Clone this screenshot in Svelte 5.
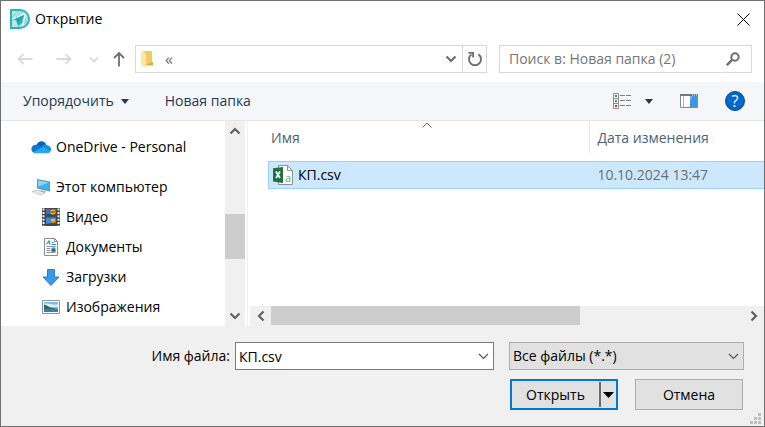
<script lang="ts">
  type Place = { name: string; icon: string; nested: boolean };

  const places: Place[] = [
    { name: "OneDrive - Personal", icon: "cloud", nested: false },
    { name: "Этот компьютер", icon: "computer", nested: false },
    { name: "Видео", icon: "video", nested: true },
    { name: "Документы", icon: "document", nested: true },
    { name: "Загрузки", icon: "download", nested: true },
    { name: "Изображения", icon: "picture", nested: true },
  ];

  const files = [{ name: "КП.csv", modified: "10.10.2024 13:47" }];

  let selected = $state("КП.csv");
  let fileName = $state("КП.csv");
  let filter = $state("all");

  function selectFile(name: string) {
    selected = name;
    fileName = name;
  }
</script>

{#snippet chevron(direction: string)}
  <svg class="chevron {direction}" width="12" height="12" viewBox="0 0 12 12">
    <path d="M1.5 3.5 6 8l4.5-4.5" fill="none" stroke="currentColor" stroke-width="2.2" />
  </svg>
{/snippet}

{#snippet thinChevron()}
  <svg class="thin-chevron" width="11" height="7" viewBox="0 0 11 7">
    <path d="M1 1l4.500 4.500L10 1" fill="none" stroke="currentColor" stroke-width="1.2" />
  </svg>
{/snippet}

{#snippet placeIcon(icon: string)}
  {#if icon === "cloud"}
    <svg width="20" height="20" viewBox="0 0 20 20">
      <path d="M5.500 8C7 4 12.500 2.500 15.200 7.600L11 11z" fill="#0364b8" />
      <path d="M4.200 16.200C-.8 15.500-1 8.600 4.500 7.800c3-.6 4.500.6 7.500 2.500l-7 6z" fill="#0f78d4" />
      <path d="M11 9.500c1.500-2.500 4-2.400 5.300-1.300 4.300.8 4.600 5.300 2.500 6.800z" fill="#1490df" />
      <path d="M2.300 15.300 11.500 10l7.800 4.200c-.6 1.400-1.700 2-3.300 2H5c-1.200 0-2-.3-2.700-.9z" fill="#28a8ea" />
    </svg>
  {:else if icon === "computer"}
    <svg width="20" height="20" viewBox="0 0 20 20">
      <path d="M6 2l13 2.500v10L6 11.500z" fill="#7b8a97" />
      <path d="M7 3.200l11 2.200v7.800l-11-2.600z" fill="#39b4f5" />
      <path d="M7 3.200l11 2.200L7 9.500z" fill="#86d6fb" />
      <path d="M10 13l5 1.200-1 2-5-1z" fill="#a9b1b8" />
      <path d="M1 14.500l5-1.500 8 2.500-4 2.500z" fill="#d4d8dc" stroke="#aab0b6" stroke-width=".6" />
      <path d="M3 14.800l8 2.200M5 14l7 2" stroke="#fff" stroke-width=".6" />
    </svg>
  {:else if icon === "video"}
    <svg width="20" height="20" viewBox="0 0 20 20">
      <path d="M1 1h18v18H1z" fill="#444" />
      <path d="M2.500 1.500v18M17.500 1.500v18" stroke="#f2f2f2" stroke-width="2" stroke-dasharray="2 1.400" />
      <path d="M5 2h10v7.500H5z" fill="#3e6fc4" />
      <path d="M5 10.500h10V19H5z" fill="#4a86d8" />
      <path d="M5 8c2-2 3 0 5-1s3-1 5 0v2.500H5zM5 17c2-1 4 0 5-1s3-1 5 0v3H5z" fill="#31533a" />
      <circle cx="12" cy="5" r="2.600" fill="#e6b422" />
      <path d="M9.600 5h4.800" stroke="#d33b2a" stroke-width="1.400" />
      <circle cx="12" cy="14" r="2.300" fill="#f0c52e" />
      <path d="M6 6.500h2.500M10 15h4" stroke="#d33b2a" stroke-width="1.200" />
    </svg>
  {:else if icon === "document"}
    <svg width="20" height="20" viewBox="0 0 20 20">
      <path d="M3.500 1.500h10l3 3v14h-13z" fill="#fff" stroke="#8b8b8b" />
      <path d="M13.500 1.500v3h3" fill="none" stroke="#8b8b8b" />
      <path d="M5.500 7.500 8 3.500l1 4M6.500 6H9M10.500 5.500h2M10.500 7.500H15" fill="none" stroke="#2b8bd8" />
      <path d="M5.500 9.500h9M5.500 11.500h4M5.500 13.500h4M5.500 15.500h9" stroke="#8f9499" />
      <path d="M10.500 10.500h4v4h-4z" fill="#3d95d5" />
      <path d="M10.500 13l2-1 2 1v1.500h-4z" fill="#31576b" />
    </svg>
  {:else if icon === "download"}
    <svg width="20" height="20" viewBox="0 0 20 20">
      <path d="M6.500 2.500h7V10H18l-8 8.500L2 10h4.500z" fill="#3b97e8" stroke="#2a7fd0" />
    </svg>
  {:else}
    <svg width="20" height="20" viewBox="0 0 20 20">
      <path d="M1.500 3.500h17v13h-17z" fill="#fff" stroke="#919191" />
      <path d="M3 5h14v10H3z" fill="#79bcea" />
      <path d="M3 7c4-1.500 7 1 14 .5V10H3z" fill="#d9effb" />
      <path d="M3 7.500c3 .5 5 3 9 3.800l5 .7H3z" fill="#2e6b55" />
      <path d="M3 12h14v3H3z" fill="#2c83bb" />
    </svg>
  {/if}
{/snippet}

<div class="dialog" role="dialog" aria-label="Открытие">
  <header class="title-bar">
    <svg width="20" height="20" viewBox="0 0 20 20">
      <path d="M0 0h10a10 10 0 0 1 0 20H0z" fill="#2cb5b8" />
      <path d="M2 2h8a8 8 0 0 1 0 16H2z" fill="#b9e6e6" />
      <path d="M2 8l7-6M2 12 13 2M11 18l6-6M8 18l9-9" stroke="#62c9cb" stroke-width="1.200" stroke-dasharray="1 1" />
      <path d="M14.500 5.500 3 10.300l3.300 1.200L8 17z" fill="#22a5aa" />
      <path d="M14.500 5.500 12 14l-4 3 1-5z" fill="#2cb5b8" />
      <path d="M14.500 5 2.500 10.300M15 5.500 12.500 17" stroke="#fff" />
    </svg>
    <h1>Открытие</h1>
    <button class="close" type="button" aria-label="Закрыть">
      <svg width="13" height="13" viewBox="0 0 13 13">
        <path d="M.5.5l12 12M12.500.5l-12 12" stroke="#000" />
      </svg>
    </button>
  </header>

  <nav class="nav-bar">
    <button class="arrow" type="button" aria-label="Назад" disabled>
      <svg width="16" height="12" viewBox="0 0 16 12">
        <path d="M15.500 6H1.500M6.500 1l-5 5 5 5" fill="none" stroke="#dadada" stroke-width="1.800" />
      </svg>
    </button>
    <button class="arrow" type="button" aria-label="Вперёд" disabled>
      <svg width="16" height="12" viewBox="0 0 16 12">
        <path d="M.5 6h14M9.500 1l5 5-5 5" fill="none" stroke="#dadada" stroke-width="1.800" />
      </svg>
    </button>
    <button class="recent" type="button" aria-label="Последние расположения" disabled>
      <svg width="10" height="7" viewBox="0 0 10 7">
        <path d="M1 1.500l4 4 4-4" fill="none" stroke="#dadada" stroke-width="1.800" />
      </svg>
    </button>
    <button class="parent" type="button" aria-label="Вверх">
      <svg width="12" height="16" viewBox="0 0 12 16">
        <path d="M6 15.500V2M1 7l5-5 5 5" fill="none" stroke="#6e6e6e" stroke-width="1.800" />
      </svg>
    </button>
    <div class="address">
      <svg width="14" height="18" viewBox="0 0 14 18">
        <path d="M3 1h9v11.500l1 .5v2H3z" fill="#f0cb62" />
        <path d="M12 12h1v3.500H5z" fill="#d9ad45" />
        <path d="M1 1.500h3.500V3L6 4v12l-1.500 1.500L1 15z" fill="#ffe7a3" />
      </svg>
      <button class="crumb" type="button">«</button>
      <button class="history" type="button" aria-label="Предыдущие расположения">
        {@render chevron("down")}
      </button>
      <button class="refresh" type="button" aria-label="Обновить">
        <svg width="16" height="16" viewBox="0 0 16 16">
          <path d="M11.300 3.200A6 6 0 1 1 4.400 3.400" fill="none" stroke="#6e6e6e" stroke-width="1.900" />
          <path d="M1.500 1.900h4.600v4.600" fill="none" stroke="#6e6e6e" stroke-width="1.800" />
        </svg>
      </button>
    </div>
    <div class="search">
      <input type="search" aria-label="Поиск" placeholder="Поиск в: Новая папка (2)" />
      <svg width="14" height="14" viewBox="0 0 14 14">
        <circle cx="9" cy="5" r="3.700" fill="none" stroke="#6e6e6e" stroke-width="2" />
        <path d="M6.300 7.700.8 13.200" stroke="#6e6e6e" stroke-width="2.400" />
      </svg>
    </div>
  </nav>

  <div class="toolbar">
    <button class="organize" type="button">
      Упорядочить
      <svg width="8" height="5" viewBox="0 0 8 5"><path d="M0 0h8L4 5z" fill="#1e395b" /></svg>
    </button>
    <button type="button">Новая папка</button>
    <div class="views">
      <button class="view-mode" type="button" aria-label="Изменить представление">
        <svg width="18" height="16" viewBox="0 0 18 16">
          <path d="M.5.500h5v15h-5zM.5 5.500h5M.5 10.500h5" fill="#fff" stroke="#8c8c8c" />
          <path d="M2 2h2v2H2z" fill="#3f7a6a" />
          <path d="M2 7h2v2H2z" fill="#5a8f3c" />
          <path d="M2 12h2v2H2z" fill="#c22f1e" />
          <path d="M7 2.500h5M13 2.500h5M7 7.500h5M13 7.500h5M7 12.500h5M13 12.500h5" stroke="#7d7d7d" />
        </svg>
        <svg width="8" height="5" viewBox="0 0 8 5"><path d="M0 0h8L4 5z" fill="#1e395b" /></svg>
      </button>
      <button type="button" aria-label="Область просмотра">
        <svg width="18" height="14" viewBox="0 0 18 14">
          <path d="M.5.500h17v13H.5z" fill="#fff" stroke="#838a90" />
          <path d="M0 0h18v2H0z" fill="#6f7980" />
          <path d="M12 1h1M14 1h1M16 1h1" stroke="#fff" />
          <path d="M3.500 2v11" stroke="#b5b5b5" />
          <path d="M10 2h7v11h-7z" fill="#4296dd" />
          <path d="M10 2h3l-3 5z" fill="#6bb0e8" />
        </svg>
      </button>
      <button class="help" type="button" aria-label="Справка">?</button>
    </div>
  </div>

  <div class="browser">
    <aside>
      <ul class="places">
        {#each places as place}
          <li class:nested={place.nested}>
            <a href="#{place.icon}">
              {@render placeIcon(place.icon)}
              {place.name}
            </a>
          </li>
        {/each}
      </ul>
      <div class="scrollbar vertical">
        <button type="button" aria-label="Прокрутить вверх">{@render chevron("up")}</button>
        <span class="before"></span>
        <span class="thumb"></span>
        <span class="after"></span>
        <button type="button" aria-label="Прокрутить вниз">{@render chevron("down")}</button>
      </div>
    </aside>

    <main>
      <div class="list">
        <table>
          <thead>
            <tr>
              <th class="name">
                Имя
                <svg class="sort" width="10" height="6" viewBox="0 0 10 6">
                  <path d="M.5 5.500 5 1l4.500 4.500" fill="none" stroke="#6d6d6d" />
                </svg>
              </th>
              <th>Дата изменения</th>
            </tr>
          </thead>
          <tbody>
            {#each files as file}
              <tr class:selected={selected === file.name} onclick={() => selectFile(file.name)}>
                <td>
                  <span class="file">
                    <svg width="20" height="20" viewBox="0 0 20 20">
                      <path d="M5.500.500h9l5 5v14h-14z" fill="#fff" stroke="#909090" />
                      <path d="M14.500.500v5h5" fill="none" stroke="#909090" />
                      <path d="M0 3.200 10 2v16L0 16.600z" fill="#1e7145" />
                      <path d="M3 6.500l4 6.500M7 6.500 3 13" stroke="#fff" stroke-width="1.700" />
                      <text x="12" y="17" font-size="11" fill="#5aa87c">a</text>
                    </svg>
                    {file.name}
                  </span>
                </td>
                <td class="date">{file.modified}</td>
              </tr>
            {/each}
          </tbody>
        </table>
      </div>
      <div class="scrollbar horizontal">
        <button type="button" aria-label="Прокрутить влево">{@render chevron("left")}</button>
        <span class="thumb"></span>
        <span class="after"></span>
        <button type="button" aria-label="Прокрутить вправо">{@render chevron("right")}</button>
      </div>
    </main>
  </div>

  <footer>
    <div class="fields">
      <label for="file-name">Имя файла:</label>
      <div class="combo">
        <input id="file-name" type="text" bind:value={fileName} />
        {@render thinChevron()}
      </div>
      <div class="combo filter">
        <select aria-label="Тип файлов" bind:value={filter}>
          <option value="all">Все файлы (*.*)</option>
        </select>
        {@render thinChevron()}
      </div>
    </div>
    <div class="actions">
      <div class="split">
        <button class="open" type="button">Открыть</button>
        <button class="more" type="button" aria-label="Варианты открытия">
          <svg width="11" height="6" viewBox="0 0 11 6"><path d="M0 0h11L5.500 6z" fill="#000" /></svg>
        </button>
      </div>
      <button class="cancel" type="button">Отмена</button>
    </div>
    <svg class="grip" width="11" height="11" viewBox="0 0 11 11">
      <path
        d="M8 0h3v3H8zM4 4h3v3H4zM8 4h3v3H8zM0 8h3v3H0zM4 8h3v3H4zM8 8h3v3H8z"
        fill="#bfbfbf"
      />
    </svg>
  </footer>
</div>

<style>
  :global(body) {
    margin: 0;
  }

  .dialog {
    display: flex;
    flex-direction: column;
    box-sizing: border-box;
    min-height: 100vh;
    border: 1px solid #6f6f6f;
    background-color: #fff;
    color: #000;
    font-family: "Open Sans", "Noto Sans", sans-serif;
    font-size: 14px;
    line-height: 20px;
  }

  button,
  input,
  select {
    box-sizing: border-box;
    margin: 0;
    padding: 0;
    border: none;
    background: none;
    color: inherit;
    font: inherit;
  }

  svg {
    display: block;
    flex: none;
  }

  .title-bar {
    display: flex;
    align-items: center;
    height: 36px;
    padding: 0 14px 0 9px;
  }

  h1 {
    flex: 1;
    margin: 0 0 0 5px;
    font-size: 14px;
    font-weight: 400;
  }

  .nav-bar {
    display: flex;
    align-items: center;
    padding: 8px 12px 9px 16px;
  }

  .arrow {
    margin-right: 23px;
  }

  .arrow + .arrow {
    margin-right: 17px;
  }

  .recent {
    margin-right: 14px;
  }

  .parent {
    margin-right: 10px;
  }

  .address,
  .search {
    display: flex;
    align-items: center;
    box-sizing: border-box;
    height: 28px;
    border: 1px solid #d9d9d9;
    color: #6e6e6e;
  }

  .address {
    flex: 1;
    margin-right: 12px;
    padding-left: 4px;
  }

  .crumb {
    margin-left: 11px;
    font-size: 16px;
  }

  .history {
    margin-left: auto;
    margin-right: 5px;
  }

  .refresh {
    align-self: stretch;
    padding: 0 3px 0 4px;
    border-left: 1px solid #d9d9d9;
  }

  .search {
    width: 253px;
    padding: 0 11px 0 9px;
  }

  .search input {
    flex: 1;
    min-width: 0;
    appearance: none;
    outline: none;
  }

  .search input::placeholder {
    color: #757575;
    opacity: 1;
  }

  .toolbar {
    display: flex;
    align-items: center;
    height: 38px;
    padding: 0 19px 0 22px;
    border-bottom: 1px solid #e3e6e9;
    background-color: #f5f6f7;
    color: #1e395b;
  }

  .organize {
    display: flex;
    align-items: center;
    gap: 7px;
    margin-right: 36px;
  }

  .views {
    display: flex;
    align-items: center;
    gap: 27px;
    margin-left: auto;
  }

  .view-mode {
    display: flex;
    align-items: center;
    gap: 14px;
  }

  .help {
    width: 20px;
    height: 20px;
    border: 1px solid #0b4a8f;
    border-radius: 50%;
    background-color: #0067cf;
    color: #fff;
    font-size: 16px;
    line-height: 18px;
  }

  .browser {
    display: flex;
    flex: 1;
  }

  aside {
    display: flex;
    flex: none;
    width: 244px;
    border-right: 2px solid #fff;
  }

  .places {
    flex: 1;
    margin: 0;
    padding: 11px 0 4px;
    list-style: none;
  }

  .places a {
    display: flex;
    align-items: center;
    gap: 5px;
    height: 30px;
    padding-left: 30px;
    color: inherit;
    text-decoration: none;
  }

  .places .nested a {
    padding-left: 40px;
  }

  .places li:first-child {
    margin-bottom: 10px;
  }

  .scrollbar {
    display: flex;
    flex: none;
    background-color: #f0f0f0;
    color: #606060;
  }

  .scrollbar button {
    display: flex;
    align-items: center;
    justify-content: center;
  }

  .thumb {
    background-color: #cdcdcd;
  }

  .vertical {
    flex-direction: column;
    width: 20px;
  }

  .vertical button {
    height: 20px;
  }

  .vertical .before {
    flex: 73;
  }

  .vertical .thumb {
    flex: 44;
  }

  .vertical .after {
    flex: 47;
  }

  .horizontal {
    height: 20px;
    margin-left: 2px;
  }

  .horizontal button {
    width: 21px;
  }

  .horizontal .thumb {
    flex: 310;
    margin-bottom: 1px;
  }

  .horizontal .after {
    flex: 163;
  }

  .chevron.up {
    transform: rotate(180deg);
  }

  .chevron.left {
    transform: rotate(90deg);
  }

  .chevron.right {
    transform: rotate(-90deg);
  }

  main {
    display: flex;
    flex: 1;
    flex-direction: column;
    min-width: 0;
    border-left: 1px solid #f0f0f0;
  }

  .list {
    flex: 1;
    padding-left: 20px;
  }

  table {
    width: 100%;
    border-collapse: separate;
    border-spacing: 0;
    table-layout: fixed;
  }

  th {
    height: 32px;
    padding: 2px 0 0 7px;
    box-sizing: border-box;
    color: #4c607a;
    font-weight: 400;
    text-align: left;
  }

  th.name {
    position: relative;
    width: 65%;
    padding-left: 3px;
    border-right: 1px solid #e5e5e5;
  }

  .sort {
    position: absolute;
    top: 1px;
    left: 48%;
  }

  tbody::before {
    content: "";
    display: block;
    height: 8px;
  }

  td {
    box-sizing: border-box;
    height: 28px;
    padding: 0 0 0 7px;
    border: 1px solid transparent;
    border-width: 1px 0;
  }

  td:first-child {
    padding-left: 4px;
    border-left-width: 1px;
  }

  .selected td {
    border-color: #99d1ff;
    background-color: #cce8ff;
  }

  .file {
    display: flex;
    align-items: center;
    gap: 5px;
  }

  .date {
    color: #6d6d6d;
  }

  footer {
    position: relative;
    padding: 16px 20px;
    background-color: #f0f0f0;
  }

  .fields {
    display: grid;
    grid-template-columns: 214fr 274fr 235fr;
    align-items: center;
  }

  label {
    padding-right: 5px;
    text-align: right;
  }

  .combo {
    position: relative;
    margin-right: 15px;
  }

  .combo input,
  .combo select {
    display: block;
    width: 100%;
    height: 28px;
    padding: 0 24px 0 3px;
    border: 1px solid #7a7a7a;
    background-color: #fff;
  }

  .filter {
    margin-right: 0;
  }

  .combo select {
    appearance: none;
    border-color: #adadad;
    background-color: #e1e1e1;
  }

  .thin-chevron {
    position: absolute;
    top: 11px;
    right: 5px;
    color: #555;
    pointer-events: none;
  }

  .actions {
    display: flex;
    justify-content: flex-end;
    gap: 17px;
    margin-top: 9px;
    padding-right: 1px;
  }

  .split {
    display: flex;
    align-items: stretch;
    box-sizing: border-box;
    width: 108px;
    height: 31px;
    border: 2px solid #0078d7;
    background-color: #e1e1e1;
  }

  .open {
    flex: 1;
  }

  .more {
    margin: 1px 0;
    padding: 0 2px;
    border-left: 2px solid #6d6d6d;
  }

  .cancel {
    width: 108px;
    height: 31px;
    border: 1px solid #adadad;
    background-color: #e1e1e1;
  }

  .grip {
    position: absolute;
    right: 3px;
    bottom: 2px;
  }
</style>
